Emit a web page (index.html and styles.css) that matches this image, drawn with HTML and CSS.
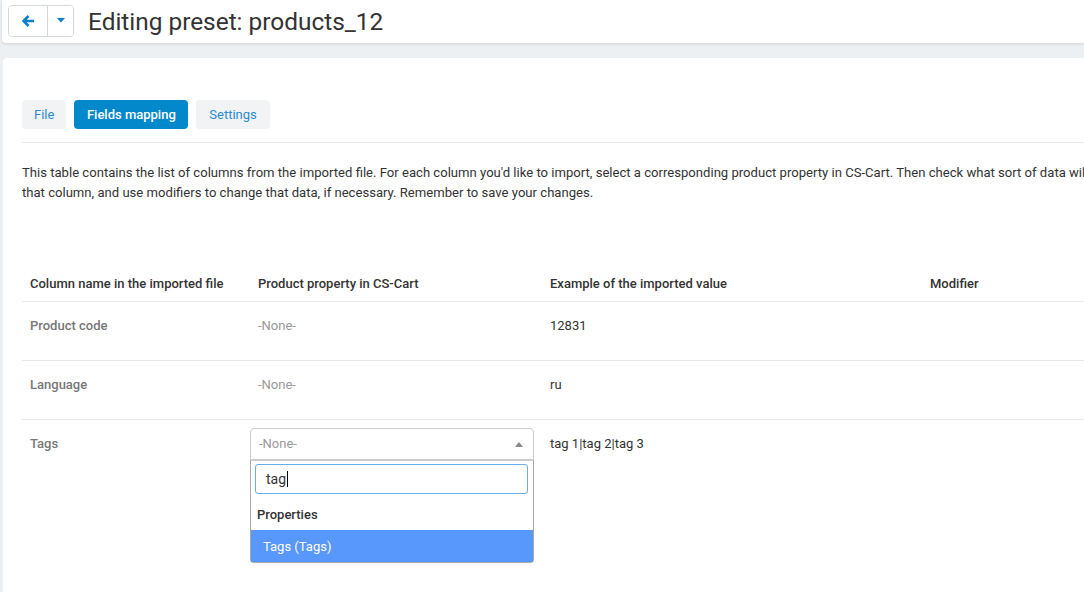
FILE: index.html
```html
<!DOCTYPE html>
<html>
<head>
<meta charset="utf-8">
<link rel="stylesheet" href="styles.css">
</head>
<body>
<header class="topbar">
  <div class="btn-group">
    <button class="btn btn-back" aria-label="Back">
      <svg width="13" height="12" viewBox="0 0 13 12"><path d="M6.5 1 L1.5 6 L6.5 11 M2 6 H12" fill="none" stroke="#0b7fd0" stroke-width="2.6" stroke-linejoin="miter"/></svg>
    </button>
    <button class="btn btn-caret" aria-label="More">
      <svg width="8" height="5" viewBox="0 0 8 5"><path d="M0 0 H8 L4 4.5 Z" fill="#0b7fd0"/></svg>
    </button>
  </div>
  <h1 class="title">Editing preset: products_12</h1>
</header>

<main class="panel">
  <nav class="tabs">
    <a class="tab">File</a>
    <a class="tab active">Fields mapping</a>
    <a class="tab">Settings</a>
  </nav>

  <p class="intro">This table contains the list of columns from the imported file. For each column you'd like to import, select a corresponding product property in CS-Cart. Then check what sort of data will be imported from that column, and use modifiers to change that data, if necessary. Remember to save your changes.</p>

  <table class="map">
    <thead>
      <tr>
        <th class="c1">Column name in the imported file</th>
        <th class="c2">Product property in CS-Cart</th>
        <th class="c3">Example of the imported value</th>
        <th class="c4">Modifier</th>
      </tr>
    </thead>
    <tbody>
      <tr>
        <td class="name">Product code</td>
        <td class="none">-None-</td>
        <td class="val">12831</td>
        <td></td>
      </tr>
      <tr>
        <td class="name">Language</td>
        <td class="none">-None-</td>
        <td class="val">ru</td>
        <td></td>
      </tr>
      <tr>
        <td class="name">Tags</td>
        <td class="sel-cell">
          <div class="select">
            <div class="select-box">
              <span class="select-text">-None-</span>
              <span class="select-arrow"></span>
            </div>
            <div class="dropdown">
              <div class="search"><span class="search-text">tag</span><span class="cursor"></span></div>
              <div class="group">Properties</div>
              <div class="option hl">Tags (Tags)</div>
            </div>
          </div>
        </td>
        <td class="val">tag 1|tag 2|tag 3</td>
        <td></td>
      </tr>
    </tbody>
  </table>
</main>
</body>
</html>
```

FILE: styles.css
```css
* { box-sizing: border-box; }
html, body { margin: 0; padding: 0; }
body {
  background: #edf0f2;
  font-family: Roboto, "Noto Sans", Arial, sans-serif;
  color: #333;
  width: 1084px;
  height: 592px;
  overflow: hidden;
}
.topbar {
  height: 43px;
  margin-left: 2px;
  background: #fff;
  border-bottom-left-radius: 4px;
  box-shadow: 0 1px 3px rgba(0,0,0,0.13);
  display: flex;
  align-items: center;
  padding-left: 6px;
}
.btn-group {
  display: flex;
  height: 32px;
  border: 1px solid #d3d8dc;
  border-radius: 4px;
  overflow: hidden;
  margin-top: -2px;
}
.btn {
  border: 0;
  background: #fff;
  padding: 0;
  display: flex;
  align-items: center;
  justify-content: center;
  height: 100%;
}
.btn-back { width: 39px; border-right: 1px solid #d3d8dc; }
.btn-caret { width: 25px; }
.title {
  margin: 0 0 0 14px;
  font-size: 24.4px;
  font-weight: 400;
  color: #333;
  margin-top: -1px;
}
.panel {
  margin: 15px 0 0 3px;
  background: #fff;
  border-top-left-radius: 4px;
  height: 600px;
  padding: 41px 0 0 19px;
}
.tabs {
  display: flex;
  gap: 8px;
  padding-top: 1px;
  padding-bottom: 13px;
  border-bottom: 1px solid #e4e8eb;
}
.tab {
  height: 29px;
  line-height: 30px;
  padding: 0 12px;
  border-radius: 4px;
  background: #f2f3f4;
  color: #2b8bd3;
  font-size: 13px;
}
.tab.active {
  background: #0388cc;
  color: #fff;
  font-weight: 500;
  padding: 0 12.5px;
}
.tab:last-child { padding: 0 13px; }
.intro {
  margin: 20px 0 0 0;
  font-size: 13.1px;
  line-height: 20px;
  width: 1190px;
  color: #333;
}
.map {
  margin-top: 62px;
  border-collapse: collapse;
  width: 1100px;
  font-size: 13px;
}
.map th {
  text-align: left;
  font-weight: 500;
  color: #333;
  padding: 9px 8px 7px 8px;
  line-height: 20px;
  border-bottom: 1px solid #e8e8e8;
}
.c1 { width: 228px; }
.c2 { width: 291px; }
.c3 { width: 380px; }
.map td {
  padding: 8px 8px 18px 8px;
  line-height: 32px;
  vertical-align: top;
  border-bottom: 1px solid #e8e8e8;
}
.map tbody tr:last-child td { border-bottom: 0; }
.name { color: #777; font-weight: 500; }
.none { color: #999; }
.val { color: #333; }
.sel-cell { padding-left: 0 !important; }
.select { position: relative; width: 284px; }
.select-box {
  height: 32px;
  border: 1px solid #ccc;
  border-radius: 4px 4px 0 0;
  display: flex;
  align-items: center;
  justify-content: space-between;
  padding: 0 8px 0 8px;
  color: #999;
}
.select-arrow {
  width: 0; height: 0;
  border-left: 4px solid transparent;
  border-right: 4px solid transparent;
  border-bottom: 5px solid #888;
  margin-right: 2px;
}
.dropdown {
  position: absolute;
  left: 0; top: 32px;
  width: 284px;
  background: #fff;
  border: 1px solid #aaa;
  border-top: 1px solid #ccc;
  border-radius: 0 0 4px 4px;
  padding: 3px 0 0 0;
  line-height: normal;
}
.search {
  margin: 0 5px 0 4px;
  height: 30px;
  border: 1px solid #66afe9;
  border-radius: 3px;
  display: flex;
  align-items: center;
  padding-left: 10px;
  font-size: 14px;
  color: #333;
}
.cursor { width: 1px; height: 16px; background: #000; margin-left: 1px; }
.group {
  font-weight: 500;
  color: #333;
  padding: 0 6px;
  height: 36px;
  line-height: 42px;
}
.option {
  height: 32px;
  line-height: 33px;
  padding-left: 12px;
}
.option.hl { background: #5897fb; color: #fff; }
```
